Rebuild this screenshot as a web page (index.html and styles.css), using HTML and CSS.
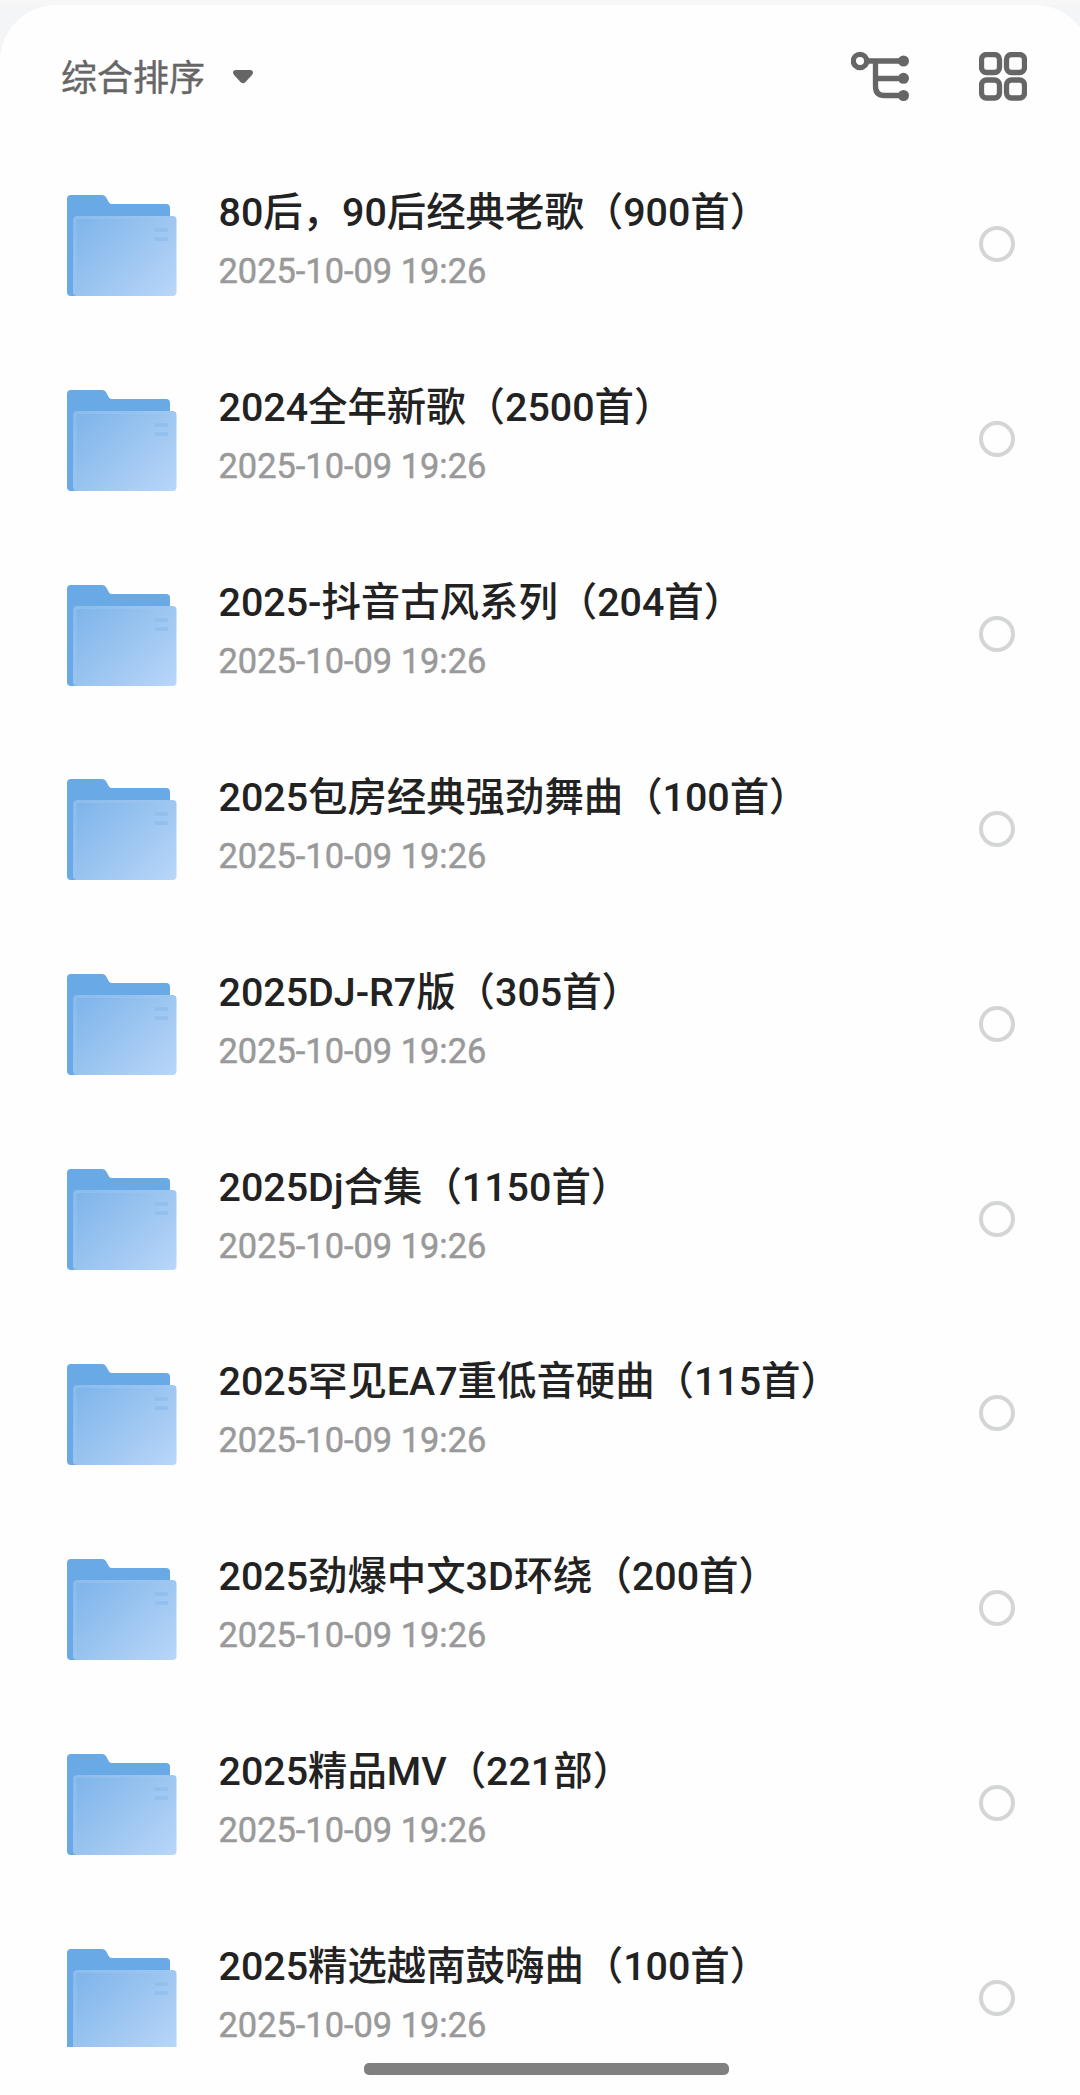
FILE: index.html
```html
<!doctype html>
<html lang="zh-CN">
<head>
    <meta charset="UTF-8">
    <meta name="viewport" content="width=device-width, initial-scale=1.0">
    <title>文件列表</title>
    <link rel="stylesheet" href="styles.css">
</head>
<body>
    <!-- icônes partagées -->
    <svg class="sprite" aria-hidden="true">
        <defs>
            <linearGradient id="folderFront" x1="0" y1="0.1" x2="1" y2="0.9">
                <stop offset="0" stop-color="#7fb5ea"/>
                <stop offset="0.45" stop-color="#98c3f0"/>
                <stop offset="1" stop-color="#b6d5f8"/>
            </linearGradient>
            <symbol id="folder" viewBox="0 0 110 101">
                <path fill="#68a9e6" d="M4 0H35Q38 0 39.500 3L42 7.500Q43 9 45 9H99Q103 9 103 13V101H4Q0 101 0 97V4Q0 0 4 0Z"/>
                <rect x="6" y="21" width="103.500" height="80" rx="4" fill="url(#folderFront)"/>
                <path d="M8 98V25Q8 22.500 11 22.500H106" fill="none" stroke="#a3c9f2" stroke-width="3" opacity=".4"/>
                <path d="M88 35H101M88 44H101" stroke="#8dbcec" stroke-width="3.500" opacity=".7"/>
            </symbol>
        </defs>
    </svg>
    <div class="panel">
        <header class="toolbar">
            <button class="sort">
                <span class="sort__label">综合排序</span>
                <svg class="sort__arrow" viewBox="0 0 20 14"><path d="M3 0H17Q20 0 20 2.500Q20 4 18.500 5.500L12.500 12Q10 14.500 7.500 12L1.500 5.500Q0 4 0 2.500Q0 0 3 0Z"/></svg>
            </button>
            <div class="toolbar__actions">
                <svg class="icon icon--tree" viewBox="0 0 58 50">
                    <circle cx="9" cy="10" r="6.700"/>
                    <path d="M16 10H52M24.500 10V35.500Q24.500 44.500 33.500 44.500H52M24.500 27.500H52"/>
                    <g class="icon__dots"><circle cx="52.500" cy="10" r="5.500"/><circle cx="52.500" cy="27.300" r="5.500"/><circle cx="52.500" cy="44.500" r="5.500"/></g>
                </svg>
                <svg class="icon icon--grid" viewBox="0 0 48 49">
                    <rect x="2.500" y="2.500" width="18" height="18" rx="5"/>
                    <rect x="27.500" y="2.500" width="18" height="18" rx="5"/>
                    <rect x="2.500" y="28" width="18" height="18" rx="5"/>
                    <rect x="27.500" y="28" width="18" height="18" rx="5"/>
                </svg>
            </div>
        </header>
        <ul class="files" id="files"></ul>
        <div class="homebar"></div>
    </div>
    <script>
        const files = document.getElementById('files');
        const names = [
            '80后，90后经典老歌（900首）',
            '2024全年新歌（2500首）',
            '2025-抖音古风系列（204首）',
            '2025包房经典强劲舞曲（100首）',
            '2025DJ-R7版（305首）',
            '2025Dj合集（1150首）',
            '2025罕见EA7重低音硬曲（115首）',
            '2025劲爆中文3D环绕（200首）',
            '2025精品MV（221部）',
            '2025精选越南鼓嗨曲（100首）'
        ];

        names.forEach(name => {
            let item = document.createElement('li');
            item.className = 'file';
            item.innerHTML = '<svg class="file__icon"><use href="#folder"/></svg>' +
                '<div class="file__infos"><p class="file__name">' + name + '</p>' +
                '<p class="file__date">2025-10-09 19:26</p></div>' +
                '<span class="file__check"></span>';
            files.appendChild(item);
        });
    </script>
</body>
</html>
```
FILE: styles.css
```css
*, ::before, ::after {
    padding: 0;
    margin: 0;
    box-sizing: border-box;
    font-family: Roboto, 'Noto Sans CJK SC', sans-serif;
}
body {
    height: 2095px;
    background: #f3f5f7;
    border-top: 5px solid #f7f7f7;
    overflow: hidden;
}
.sprite {
    position: absolute;
    width: 0;
    height: 0;
}
.panel {
    width: 1091px;
    height: 2090px;
    padding-right: 11px;
    display: flex;
    flex-direction: column;
    background: #fefefe;
    border-radius: 56px 56px 0 0;
}
.toolbar {
    flex: none;
    height: 142px;
    padding: 0 53px 0 61px;
    display: flex;
    justify-content: space-between;
    align-items: flex-start;
}
.sort {
    height: 144px;
    display: flex;
    align-items: center;
    gap: 28px;
    border: none;
    background: none;
    font-size: 36px;
    color: #666666;
}
.sort__label {
    margin-top: -5px;
    -webkit-text-stroke: .4px #666666;
}
.sort__arrow {
    width: 20px;
    height: 14px;
    fill: #666666;
}
.toolbar__actions {
    display: flex;
    align-items: flex-start;
    gap: 70px;
    padding-top: 47px;
}
.icon {
    fill: none;
    stroke: #666666;
    stroke-width: 5.3;
}
.icon--tree {
    width: 58px;
    height: 50px;
    margin-top: -1px;
}
.icon--grid {
    width: 48px;
    height: 49px;
}
.icon__dots {
    fill: #666666;
    stroke: none;
}
.files {
    flex: none;
    height: 1900px;
    overflow: hidden;
    list-style: none;
}
.file {
    height: 194.85px;
    padding: 0 65px 0 66.5px;
    display: flex;
    align-items: center;
}
.file__icon {
    width: 110px;
    height: 101px;
    margin-right: 42px;
    margin-top: 2px;
}
.file__infos {
    flex: 1;
    margin-top: -4px;
}
.file__name {
    font-size: 39.4px;
    font-weight: 500;
    line-height: 58px;
    color: #222222;
    white-space: nowrap;
}
.file__date {
    font-size: 34.4px;
    line-height: 58px;
    color: #999999;
    -webkit-text-stroke: .5px #999999;
}
.file__check {
    width: 36px;
    height: 36px;
    border: 4px solid #d3d5d6;
    border-radius: 50%;
}
.homebar {
    width: 365px;
    height: 12px;
    margin: 16px 0 0 364px;
    border-radius: 5px;
    background: #808080;
}
```
